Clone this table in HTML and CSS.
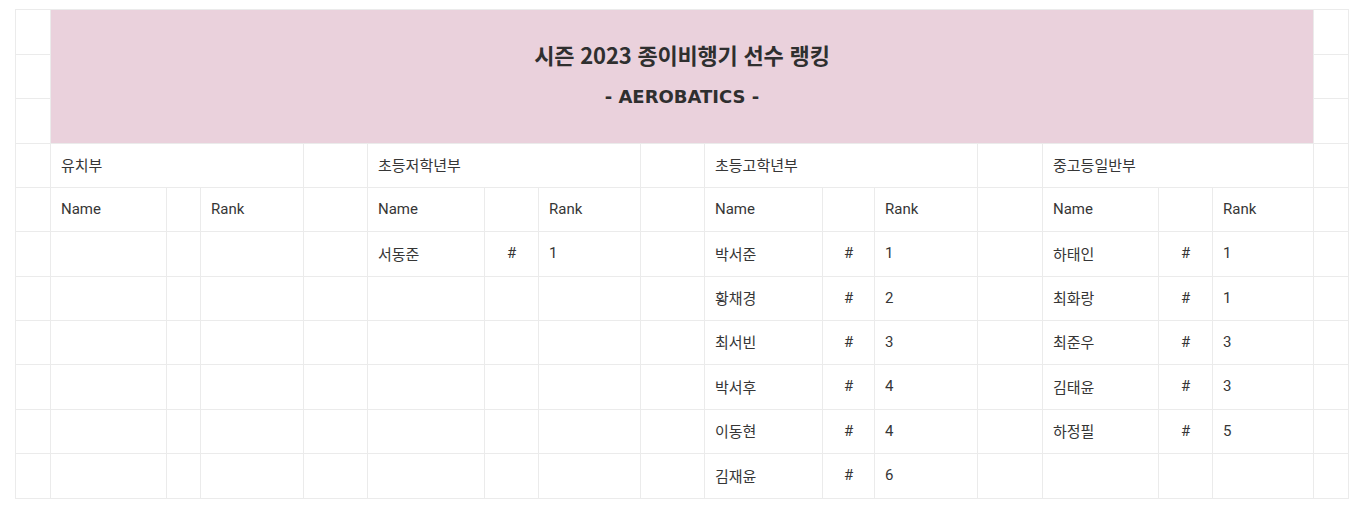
FILE: index.html
```html
<!DOCTYPE html>
<html lang="ko">
<head>
<meta charset="utf-8">
<title>시즌 2023 종이비행기 선수 랭킹</title>
<link rel="stylesheet" href="styles.css">
</head>
<body>
<div class="sheet">
  <!-- rows 1-3: banner with side cells -->
  <div class="cell"></div>
  <div class="banner">
    <div class="title">시즌 2023 종이비행기 선수 랭킹</div>
    <div class="subtitle">- AEROBATICS -</div>
  </div>
  <div class="cell"></div>
  <div class="cell"></div>
  <div class="cell"></div>
  <div class="cell"></div>
  <div class="cell"></div>

  <!-- row 4: division names -->
  <div class="cell"></div>
  <div class="cell span3">유치부</div>
  <div class="cell"></div>
  <div class="cell span3">초등저학년부</div>
  <div class="cell"></div>
  <div class="cell span3">초등고학년부</div>
  <div class="cell"></div>
  <div class="cell span3">중고등일반부</div>
  <div class="cell"></div>

  <!-- row 5: headers -->
  <div class="cell"></div>
  <div class="cell">Name</div><div class="cell"></div><div class="cell">Rank</div>
  <div class="cell"></div>
  <div class="cell">Name</div><div class="cell"></div><div class="cell">Rank</div>
  <div class="cell"></div>
  <div class="cell">Name</div><div class="cell"></div><div class="cell">Rank</div>
  <div class="cell"></div>
  <div class="cell">Name</div><div class="cell"></div><div class="cell">Rank</div>
  <div class="cell"></div>

  <!-- row 6 -->
  <div class="cell"></div>
  <div class="cell"></div><div class="cell"></div><div class="cell"></div>
  <div class="cell"></div>
  <div class="cell">서동준</div><div class="cell hash">#</div><div class="cell">1</div>
  <div class="cell"></div>
  <div class="cell">박서준</div><div class="cell hash">#</div><div class="cell">1</div>
  <div class="cell"></div>
  <div class="cell">하태인</div><div class="cell hash">#</div><div class="cell">1</div>
  <div class="cell"></div>

  <!-- row 7 -->
  <div class="cell"></div>
  <div class="cell"></div><div class="cell"></div><div class="cell"></div>
  <div class="cell"></div>
  <div class="cell"></div><div class="cell"></div><div class="cell"></div>
  <div class="cell"></div>
  <div class="cell">황채경</div><div class="cell hash">#</div><div class="cell">2</div>
  <div class="cell"></div>
  <div class="cell">최화랑</div><div class="cell hash">#</div><div class="cell">1</div>
  <div class="cell"></div>

  <!-- row 8 -->
  <div class="cell"></div>
  <div class="cell"></div><div class="cell"></div><div class="cell"></div>
  <div class="cell"></div>
  <div class="cell"></div><div class="cell"></div><div class="cell"></div>
  <div class="cell"></div>
  <div class="cell">최서빈</div><div class="cell hash">#</div><div class="cell">3</div>
  <div class="cell"></div>
  <div class="cell">최준우</div><div class="cell hash">#</div><div class="cell">3</div>
  <div class="cell"></div>

  <!-- row 9 -->
  <div class="cell"></div>
  <div class="cell"></div><div class="cell"></div><div class="cell"></div>
  <div class="cell"></div>
  <div class="cell"></div><div class="cell"></div><div class="cell"></div>
  <div class="cell"></div>
  <div class="cell">박서후</div><div class="cell hash">#</div><div class="cell">4</div>
  <div class="cell"></div>
  <div class="cell">김태윤</div><div class="cell hash">#</div><div class="cell">3</div>
  <div class="cell"></div>

  <!-- row 10 -->
  <div class="cell"></div>
  <div class="cell"></div><div class="cell"></div><div class="cell"></div>
  <div class="cell"></div>
  <div class="cell"></div><div class="cell"></div><div class="cell"></div>
  <div class="cell"></div>
  <div class="cell">이동현</div><div class="cell hash">#</div><div class="cell">4</div>
  <div class="cell"></div>
  <div class="cell">하정필</div><div class="cell hash">#</div><div class="cell">5</div>
  <div class="cell"></div>

  <!-- row 11 -->
  <div class="cell"></div>
  <div class="cell"></div><div class="cell"></div><div class="cell"></div>
  <div class="cell"></div>
  <div class="cell"></div><div class="cell"></div><div class="cell"></div>
  <div class="cell"></div>
  <div class="cell">김재윤</div><div class="cell hash">#</div><div class="cell">6</div>
  <div class="cell"></div>
  <div class="cell"></div><div class="cell"></div><div class="cell"></div>
  <div class="cell"></div>
</div>
</body>
</html>
```

FILE: styles.css
```css
html, body {
  margin: 0;
  padding: 0;
  background: #ffffff;
}

body {
  padding: 9px 0 0 15px;
  font-family: Roboto, "Noto Sans CJK KR", sans-serif;
  font-size: 15px;
  color: #363636;
}

.sheet {
  display: grid;
  width: max-content;
  grid-template-columns:
    34px
    115px 33px 102px 63px
    116px 53px 101px 63px
    117px 51px 102px 64px
    115px 53px 100px
    34px;
  grid-template-rows: 44px 43px 44px 43px 43px 44px 43px 43px 44px 43px 44px;
  gap: 1px;
  padding: 1px;
  background: #ebebeb;
}

.cell {
  background: #ffffff;
  display: flex;
  align-items: center;
  padding-left: 10px;
  padding-bottom: 2px;
  white-space: nowrap;
  overflow: hidden;
}

.span3 {
  grid-column: span 3;
}

.hash {
  justify-content: center;
  padding-left: 0;
}

.banner {
  grid-column: 2 / span 15;
  grid-row: 1 / span 3;
  background: #ead1dc;
  display: flex;
  flex-direction: column;
  align-items: center;
  justify-content: center;
  gap: 17px;
  padding-bottom: 5px;
  font-weight: 700;
  color: #2f2f2f;
}

.title {
  font-family: "Noto Sans CJK KR", sans-serif;
  font-size: 22px;
  line-height: 28px;
  letter-spacing: -0.2px;
}

.subtitle {
  font-family: "DejaVu Sans", sans-serif;
  font-size: 18px;
  line-height: 24px;
}
```
